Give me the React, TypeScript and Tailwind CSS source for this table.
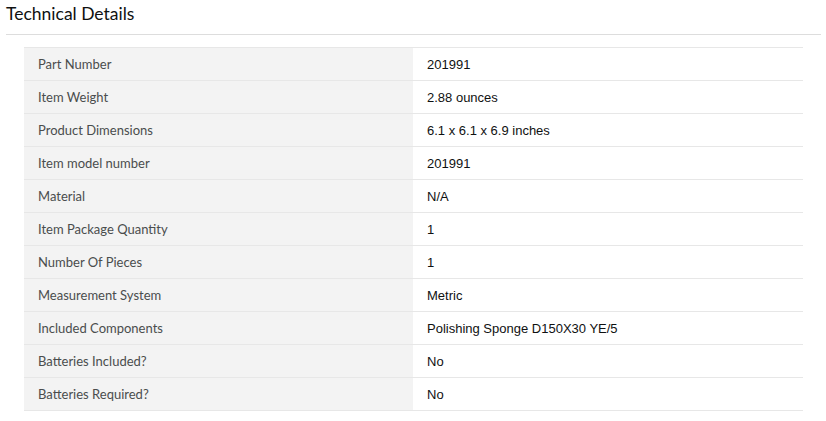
const rows: [string, string][] = [
  ['Part Number', '201991'],
  ['Item Weight', '2.88 ounces'],
  ['Product Dimensions', '6.1 x 6.1 x 6.9 inches'],
  ['Item model number', '201991'],
  ['Material', 'N/A'],
  ['Item Package Quantity', '1'],
  ['Number Of Pieces', '1'],
  ['Measurement System', 'Metric'],
  ['Included Components', 'Polishing Sponge D150X30 YE/5'],
  ['Batteries Included?', 'No'],
  ['Batteries Required?', 'No'],
]

export default function App() {
  return (
    <div className="w-[826px] h-[421px] bg-white pl-[6px] pr-[5px]">
      <h2 className="h-[34px] pt-[3px] text-[17.5px] leading-[22px] text-[#0f1111] font-['Lato','Open_Sans',sans-serif]">
        Technical Details
      </h2>
      <div className="border-t border-[#dddddd] pt-[12px] pl-[18px] pr-[18px]">
        <table className="w-[779px] border-collapse">
          <tbody>
            {rows.map(([k, v]) => (
              <tr key={k} className="border-y border-[#e7e7e7] h-[33px]">
                <th className="w-[389px] bg-[#f3f3f3] text-left font-normal pl-[14px] pt-[2px] text-[13px] text-[#4a4d4d] font-['Lato','Open_Sans',sans-serif]">
                  {k}
                </th>
                <td className="pl-[14px] pt-[2px] text-[13px] text-[#0f1111] font-['Liberation_Sans',Arial,sans-serif]">
                  {v}
                </td>
              </tr>
            ))}
          </tbody>
        </table>
      </div>
    </div>
  )
}
